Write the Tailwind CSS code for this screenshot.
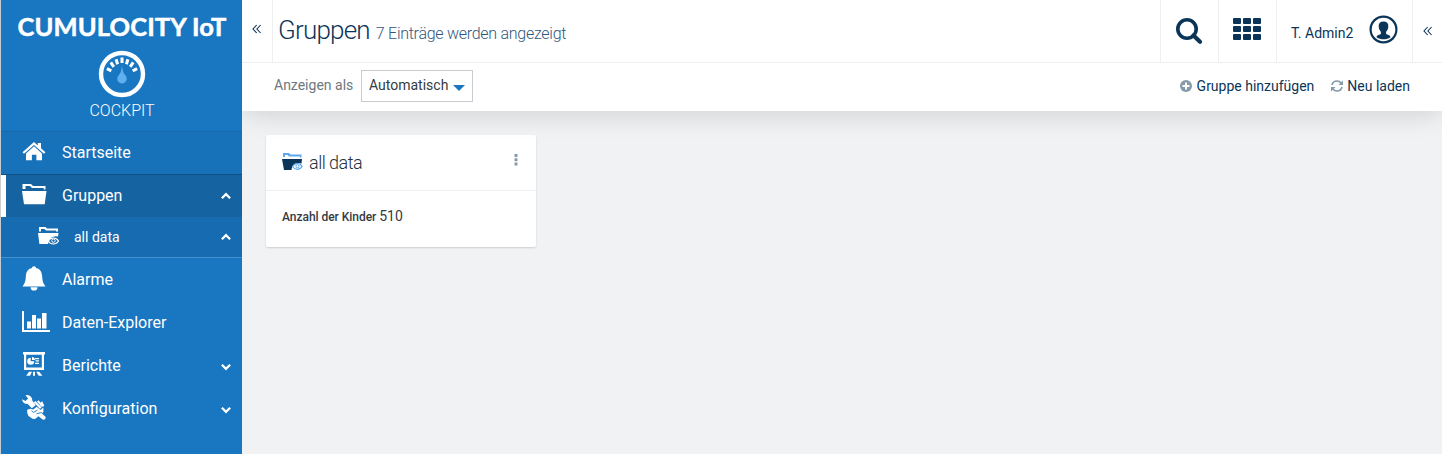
<!DOCTYPE html>
<html lang="de">
<head>
<meta charset="utf-8">
<title>Cockpit</title>
<script src="https://cdn.jsdelivr.net/npm/@tailwindcss/browser@4"></script>
</head>
<body class="flex h-[454px] w-[1442px] overflow-hidden bg-[#f1f2f4] font-['Roboto',sans-serif] text-[#0b3558]">
<aside class="z-20 flex w-[242px] shrink-0 flex-col border-l border-[#c5ccd2] bg-[#1976c1] text-white">
  <header class="flex h-[131px] flex-col items-center pl-px">
    <h1 class="mt-[11px] h-[30px] whitespace-nowrap font-['Lato',sans-serif] text-[25.5px] leading-[30px] font-bold tracking-[0.1px] [-webkit-text-stroke:0.5px_#fff]">CUMULOCITY IoT</h1>
    <svg class="mt-[9px] size-[48px]" viewBox="98 50 48 48" fill="none">
      <circle cx="122" cy="74" r="21" stroke="#fff" stroke-width="4.400"/>
      <path d="M111.300 70.800l-4.400-2.200M113.800 66.800l-3-4.400M117.600 64.200l-1.500-5M122 63v-5.600M126.400 64.200l1.500-5M130.200 66.800l3-4.400M132.700 70.800l4.400-2.200" stroke="#fff" stroke-width="3"/>
      <path d="M122 65c.6 6 1.300 8 3.500 10.500 3 4 0 8-3.500 8s-6.500-4-3.500-8c2.200-2.500 2.900-4.500 3.500-10.500z" fill="#5fb0f0"/>
    </svg>
    <p class="mt-[3px] text-[16px] leading-[20px] font-light tracking-[0px]">COCKPIT</p>
  </header>
  <nav class="flex flex-col text-[16px]">
    <a class="flex h-[43px] items-center border-t border-[#1869ab] bg-[#1872ba] pl-[19px]">
      <svg class="size-[28px]" viewBox="20 139 28 28" fill="#fff"><path d="M22.500 152.300L34 142l3.800 3.400V143h3.200v5.200l4.400 4.100-1.400 1.500-10-8.900-10 8.900z"/><path d="M26 153.400l8-7.200 8 7.200v6.900h-5.600v-5.500h-4.500v5.500H26z"/></svg>
      <span class="ml-[14px]">Startseite</span>
    </a>
    <a class="flex h-[43px] items-center border-t border-[#104f83] bg-[#1563a1] pr-[11px] pl-[15px] shadow-[inset_5px_0_0_#fff]">
      <svg class="ml-[4px] size-[28px]" viewBox="20 182 28 28" fill="#fff"><path d="M22 191h24.500l-1.800 13.300H24z"/><path d="M22.500 184h8.500l2 2h12.500v3.500h-1.800V188H32l-2-2h-4.500v3h-3z"/></svg>
      <span class="ml-[14px]">Gruppen</span>
      <svg class="ml-auto h-[8px] w-[10px]" viewBox="0 0 10 8" fill="none" stroke="#fff" stroke-width="2.300"><path d="M.9 6.200L5 2.200l4.100 4"/></svg>
    </a>
    <a class="flex h-[41px] items-center border-b border-[#4490cd] bg-[#176bb0] pr-[11px] pl-[36px] text-[14px]">
      <svg class="size-[22px]" viewBox="37 226 22 22" fill="#fff"><path d="M38 233h20.500l-.5 3.500a8 8 0 0 0-10 7.500h-8.600z"/><path d="M39 227h6.500l1.500 1.500h11v3h-2v-1H46l-1.500-1.500H41v2.500h-2z"/><path d="M48.200 241c2.500-4 8-4 10.300 0-2.300 4-7.800 4-10.300 0z" fill="none" stroke="#fff" stroke-width="1.200"/><circle cx="53.500" cy="240.700" r="1.700" fill="none" stroke="#fff"/></svg>
      <span class="ml-[15px]">all data</span>
      <svg class="ml-auto h-[8px] w-[10px]" viewBox="0 0 10 8" fill="none" stroke="#fff" stroke-width="2.300"><path d="M.9 6.200L5 2.200l4.100 4"/></svg>
    </a>
    <a class="flex h-[43px] items-center pl-[19px]">
      <svg class="size-[28px]" viewBox="20 266 28 28" fill="#fff"><path d="M34 266.300c1.200 0 2 .7 2 1.700 4.400.9 6 4.300 6.200 9 .2 4 1 6.500 3.300 9.500H22.500c2.300-3 3.100-5.500 3.300-9.500.2-4.700 1.800-8.100 6.200-9 0-1 .8-1.700 2-1.700zM30.500 287.200h7a3.500 3.400 0 0 1-7 0z"/></svg>
      <span class="ml-[14px]">Alarme</span>
    </a>
    <a class="flex h-[43px] items-center pl-[19px]">
      <svg class="h-[28px] w-[30px]" viewBox="20 309 30 28" fill="#fff"><path d="M22 311h2v19h26v2H22zM27 321.500h4v7h-4zM32 315h4v13.500h-4zM37 318.500h4v10h-4zM42 313h4.500v15.500H42z"/></svg>
      <span class="ml-[12px]">Daten-Explorer</span>
    </a>
    <a class="flex h-[43px] items-center pr-[11px] pl-[19px]">
      <svg class="size-[28px]" viewBox="20 352 28 28" fill="#fff"><path d="M23 352h22v2.500h-1V370H24v-15.500h-1zm3.200 2.800v12.700h15.600v-12.700z" fill-rule="evenodd"/><path d="M30.700 357.800v3.500h3.500a3.500 3.500 0 1 1-3.500-3.500zM32 357a3.300 3.300 0 0 1 3 3h-3zM35 358h4v1.200h-4zM35.500 360.300h3.500v1.200h-3.500zM35 362.700h4v1.200h-4zM29 371.800h3l-2 4h-3.800zM33 371.800h2v4h-2zM36.200 371.800h3l3.200 4h-3.700z"/></svg>
      <span class="ml-[14px]">Berichte</span>
      <svg class="mt-[3px] ml-auto h-[8px] w-[10px]" viewBox="0 0 10 8" fill="none" stroke="#fff" stroke-width="2.300"><path d="M.9 1.800L5 5.800l4.100-4"/></svg>
    </a>
    <a class="flex h-[43px] items-center pr-[11px] pl-[19px]">
      <svg class="size-[28px]" viewBox="20 395 28 28" fill="#fff"><path d="M25.500 395.200c4-.6 7 2 6.700 5.300l3.600 4.500-4 3.300-4.300-4.500c-3 .5-5.200-1.500-5.500-4.500l3.500 1.600 2.600-2.500z"/><path d="M33.800 402.300l1.700-1.300 6 6.200-1.500 1.700zM37 401.500l1.600-1.300 4.600 5.800-1.300 1.200zM40.600 402.500l1.600-1.200 2 4.200-.7 1.200z"/><path d="M27.200 409.800l3-1 3 .7 3.500-2.700 3.700 3.200 3-2.500v4.500l-1.600 1.500 3.700 3.200c.8 2-1.200 3.800-3.200 2.500l-3.800-3-3.500 2.700-2.500-.2-4-2.700-1.300-3z"/><path d="M31.500 410.800l2 1.600 4-2.200M36.500 413.700l5.200-1.200" fill="none" stroke="#1976c1" stroke-width=".9"/></svg>
      <span class="ml-[14px]">Konfiguration</span>
      <svg class="mt-[3px] ml-auto h-[8px] w-[10px]" viewBox="0 0 10 8" fill="none" stroke="#fff" stroke-width="2.300"><path d="M.9 1.800L5 5.800l4.100-4"/></svg>
    </a>
  </nav>
</aside>
<main class="flex w-[1200px] flex-col">
  <div class="z-10 flex h-[111px] flex-col bg-white shadow-[0_4px_24px_rgba(0,0,0,0.13)]">
    <div class="flex h-[63px] border-b border-[#eeeff0]">
      <div class="w-[31px] border-r border-[#eeeff0] pt-[24px] pl-[10px]">
        <svg class="size-[10px]" viewBox="0 0 10 10" fill="none" stroke="#0b3558" stroke-width="1.100"><path d="M4.700 1L1 5l3.700 4M8.600 1L4.900 5l3.700 4"/></svg>
      </div>
      <div class="flex items-baseline pt-[13px] pl-[5px] font-light whitespace-nowrap">
        <h2 class="text-[26px] leading-[34px] tracking-[-0.8px]">Gruppen</h2>
        <span class="ml-[6px] text-[16px] tracking-[-0.27px] text-[#31587c]">7 Einträge werden angezeigt</span>
      </div>
      <div class="ml-auto flex">
        <div class="w-[58px] border-l border-[#eeeff0] pt-[17px] pl-[15px]">
          <svg class="size-[28px]" viewBox="0 0 28 28" fill="none" stroke="#0b3558"><circle cx="11" cy="12" r="9.200" stroke-width="3.600"/><path d="M17.500 18.500l6.500 6.200" stroke-width="4.200" stroke-linecap="round"/></svg>
        </div>
        <div class="w-[58px] border-l border-[#eeeff0] pt-[18px] pl-[14px]">
          <svg class="h-[22px] w-[28px]" viewBox="0 0 28 22" fill="#0b3558"><rect width="8" height="6" rx="1"/><rect x="10" width="8" height="6" rx="1"/><rect x="20" width="8" height="6" rx="1"/><rect y="8" width="8" height="6" rx="1"/><rect x="10" y="8" width="8" height="6" rx="1"/><rect x="20" y="8" width="8" height="6" rx="1"/><rect y="16" width="8" height="6" rx="1"/><rect x="10" y="16" width="8" height="6" rx="1"/><rect x="20" y="16" width="8" height="6" rx="1"/></svg>
        </div>
        <div class="flex w-[136px] border-l border-[#eeeff0] pl-[14px]">
          <span class="w-[78px] pt-[23px] text-[14px] leading-[20px]">T. Admin2</span>
          <svg class="mt-[15px] size-[29px]" viewBox="0 0 29 29"><circle cx="14.500" cy="14.500" r="12.900" fill="none" stroke="#0b3558" stroke-width="2.200"/><path d="M14.500 6.500c3.300 0 5 1.800 4.800 5-.1 2.500-1 4-2.200 5.300v2.200l3 1.200c1 .5 1.400 1.200 1.400 2-4.500 2.800-9.500 2.800-14 0 0-.8.400-1.500 1.400-2l3-1.200v-2.200c-1.200-1.300-2.100-2.800-2.200-5.300-.2-3.200 1.500-5 4.800-5z" fill="#0b3558"/></svg>
        </div>
        <div class="w-[30px] border-l border-[#eeeff0] pt-[26px] pl-[10px]">
          <svg class="size-[10px]" viewBox="0 0 10 10" fill="none" stroke="#0b3558" stroke-width="1.100"><path d="M4.700 1L1 5l3.700 4M8.600 1L4.900 5l3.700 4"/></svg>
        </div>
      </div>
    </div>
    <div class="flex h-[48px] items-start pr-[32px] pl-[32px] text-[14px] leading-[20px] whitespace-nowrap">
      <span class="w-[87px] pt-[12px] text-[#6e7880]">Anzeigen als</span>
      <div class="mt-[7px] flex h-[32px] w-[112px] border border-[#c8ccd0] pl-[7px] text-[#333b42]">
        <span class="w-[84px] pt-[4px]">Automatisch</span>
        <svg class="mt-[14px] h-[6px] w-[12px]" viewBox="0 0 12 6" fill="#1976c1"><path d="M0 0h12L6 6z"/></svg>
      </div>
      <div class="ml-auto flex pt-[13px]">
        <svg class="mt-[4px] size-[12px]" viewBox="0 0 12 12"><circle cx="6" cy="6" r="6" fill="#859aab"/><path d="M6 2.500v7M2.500 6h7" stroke="#fff" stroke-width="2"/></svg>
        <span class="ml-[5px]">Gruppe hinzufügen</span>
        <svg class="mt-[4px] ml-[17px] size-[12px]" viewBox="0 0 12 12" fill="none" stroke="#859aab" stroke-width="1.700"><path d="M1 5C1.700 2 3.600 1 6 1c1.700 0 3 .7 4.200 2M11 7c-.7 3-2.600 4-5 4-1.700 0-3-.7-4.200-2"/><path d="M12 .5V5H7.500zM0 11.500V7h4.500z" fill="#859aab" stroke="none"/></svg>
        <span class="ml-[4px]">Neu laden</span>
      </div>
    </div>
  </div>
  <section class="mt-[24px] ml-[24px] flex h-[112px] w-[270px] flex-col rounded-[2px] bg-white shadow-[0_1px_2px_rgba(0,0,0,0.15)]">
    <div class="flex h-[56px] border-b border-[#eeeff0] pl-[16px]">
      <svg class="mt-[16px] size-[22px]" viewBox="282 151 22 22"><path d="M282 159h20l-.5 4.500c-5-2-9.500 1-10 6.500H284z" fill="#0b3558"/><path d="M283 153h6l1.500 1.500h11v3h-1.500v-1H289l-1.500-1.500H285v2h-2z" fill="#5fa8ee"/><path d="M292.500 166.500c2.500-4 7.500-4 9.600 0-2.100 3.700-7.100 3.700-9.600 0z" fill="none" stroke="#5fa8ee" stroke-width="1.200"/><circle cx="297.500" cy="166.200" r="1.600" fill="none" stroke="#5fa8ee"/></svg>
      <h3 class="mt-[16px] ml-[5px] text-[18px] leading-[24px] font-light tracking-[-0.5px] text-[#26323c]">all data</h3>
      <svg class="mt-[19px] mr-[18px] ml-auto h-[12px] w-[4px]" viewBox="0 0 4 12" fill="#859aab"><rect x=".5" width="3" height="3" rx=".5"/><rect x=".5" y="4.300" width="3" height="3" rx=".5"/><rect x=".5" y="8.600" width="3" height="3" rx=".5"/></svg>
    </div>
    <p class="flex items-baseline gap-[3px] pt-[15px] pl-[16px] text-[14px] leading-[20px] text-[#333b42]"><span class="text-[12px] font-medium tracking-[-0.04px]">Anzahl der Kinder</span><span>510</span></p>
  </section>
</main>
</body>
</html>
